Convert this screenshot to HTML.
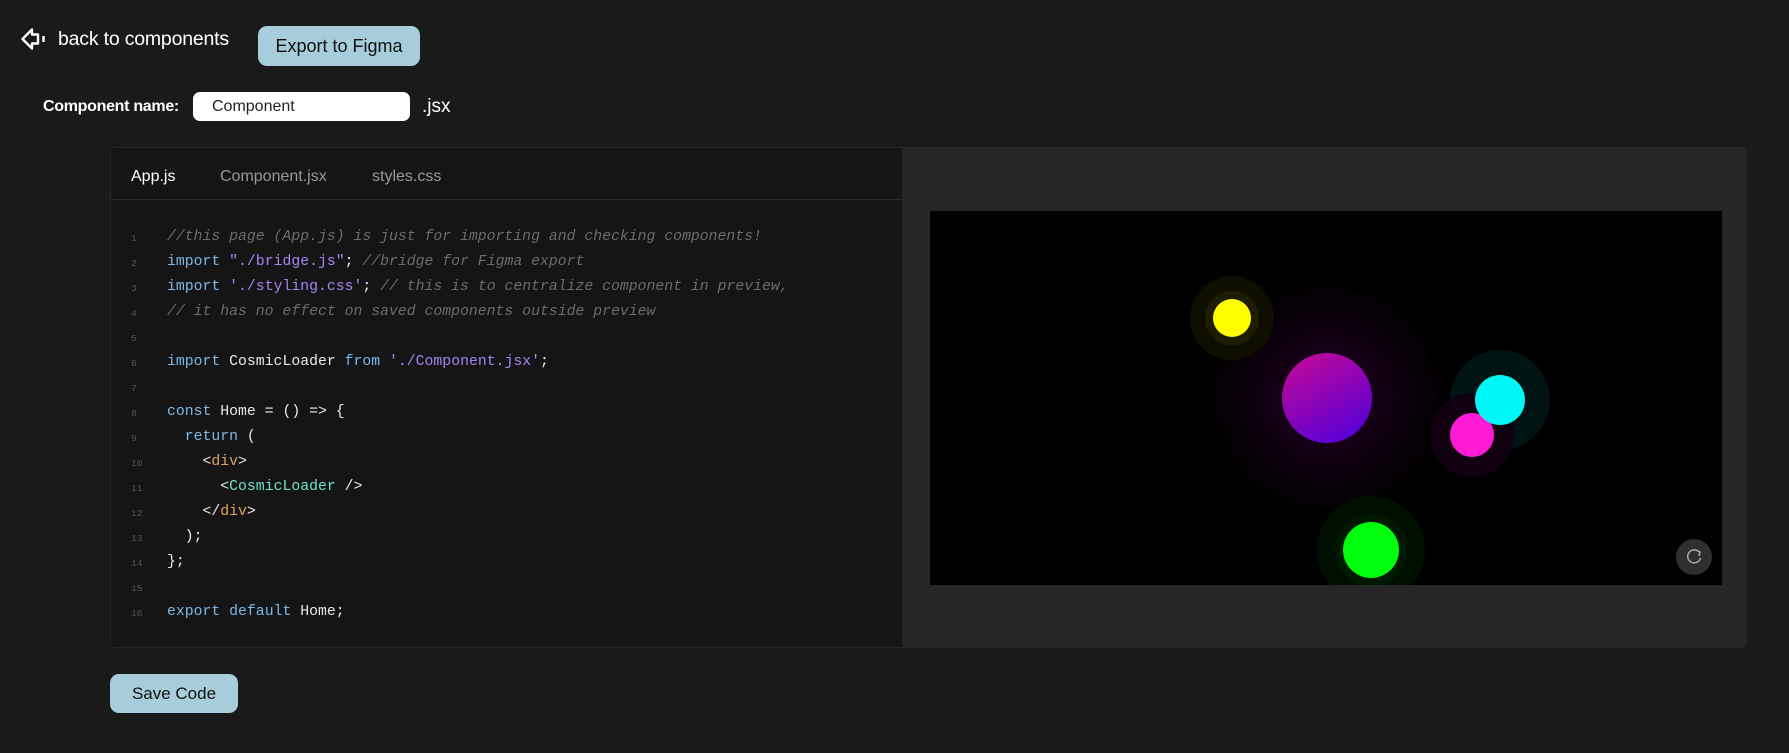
<!DOCTYPE html>
<html><head><meta charset="utf-8"><style>
*{margin:0;padding:0;box-sizing:border-box}
body{width:1789px;height:753px;background:#1a1a1a;font-family:"Liberation Sans",sans-serif;color:#fff;position:relative;overflow:hidden}
.a{position:absolute}
.btn{background:#a6cdd9;color:#111;border-radius:9px;font-size:18px;display:flex;align-items:center;justify-content:center}
.code{font-family:"Liberation Mono",monospace;font-size:14.8px;white-space:pre;color:#eaeaea}
.ln{position:absolute;left:131px;font-size:9.5px;color:#555;font-family:"Liberation Mono",monospace}
.cl{position:absolute;left:167px}
.c{color:#6c6c6c;font-style:italic}.k{color:#7cb9e8}.s{color:#a585f5}.t{color:#e0a458}.g{color:#6fe3c8}
</style></head><body>
<svg class="a" style="left:20px;top:26px" width="28" height="26" viewBox="0 0 28 26"><path d="M2.5 13 L12 3.5 L12 8.5 L18 8.5 L18 17.5 L12 17.5 L12 22.5 Z" fill="none" stroke="#fff" stroke-width="2.4" stroke-linejoin="round"/><line x1="23.5" y1="10" x2="23.5" y2="16" stroke="#fff" stroke-width="2.4"/></svg>
<div class="a" style="left:58px;top:28px;font-size:19.5px;letter-spacing:-0.2px">back to components</div>
<div class="a btn" style="left:258px;top:26px;width:162px;height:40px">Export to Figma</div>
<div class="a" style="left:43px;top:98px;font-size:16px;font-weight:bold;letter-spacing:-0.3px">Component name:</div>
<div class="a" style="left:193px;top:92px;width:217px;height:29px;background:#fff;border-radius:7px;color:#222;font-size:16px;padding:6px 0 0 19px">Component</div>
<div class="a" style="left:422px;top:96px;font-size:19px">.jsx</div>
<div class="a" style="left:110px;top:147px;width:1637px;height:501px;background:#262626;border-radius:5px;overflow:hidden">
 <div class="a" style="left:0;top:0;width:793px;height:501px;background:#151515;border:1px solid #262626"></div>
 <div class="a" style="left:0;top:52px;width:793px;height:1px;background:#2c2c2c"></div>
 <div class="a" style="left:21px;top:21px;font-size:16px;color:#fff">App.js</div>
 <div class="a" style="left:110px;top:21px;font-size:16px;color:#999">Component.jsx</div>
 <div class="a" style="left:262px;top:21px;font-size:16px;color:#999">styles.css</div>
</div>
<div class="code">
<span class="ln" style="top:233px">1</span><span class="cl c" style="top:229px">//this page (App.js) is just for importing and checking components!</span>
<span class="ln" style="top:258px">2</span><span class="cl" style="top:254px"><span class="k">import</span> <span class="s">"./bridge.js"</span>; <span class="c">//bridge for Figma export</span></span>
<span class="ln" style="top:283px">3</span><span class="cl" style="top:279px"><span class="k">import</span> <span class="s">'./styling.css'</span>; <span class="c">// this is to centralize component in preview,</span></span>
<span class="ln" style="top:308px">4</span><span class="cl c" style="top:304px">// it has no effect on saved components outside preview</span>
<span class="ln" style="top:333px">5</span>
<span class="ln" style="top:358px">6</span><span class="cl" style="top:354px"><span class="k">import</span> CosmicLoader <span class="k">from</span> <span class="s">'./Component.jsx'</span>;</span>
<span class="ln" style="top:383px">7</span>
<span class="ln" style="top:408px">8</span><span class="cl" style="top:404px"><span class="k">const</span> Home = () =&gt; {</span>
<span class="ln" style="top:433px">9</span><span class="cl" style="top:429px">  <span class="k">return</span> (</span>
<span class="ln" style="top:458px">10</span><span class="cl" style="top:454px">    &lt;<span class="t">div</span>&gt;</span>
<span class="ln" style="top:483px">11</span><span class="cl" style="top:479px">      &lt;<span class="g">CosmicLoader</span> /&gt;</span>
<span class="ln" style="top:508px">12</span><span class="cl" style="top:504px">    &lt;/<span class="t">div</span>&gt;</span>
<span class="ln" style="top:533px">13</span><span class="cl" style="top:529px">  );</span>
<span class="ln" style="top:558px">14</span><span class="cl" style="top:554px">};</span>
<span class="ln" style="top:583px">15</span>
<span class="ln" style="top:608px">16</span><span class="cl" style="top:604px"><span class="k">export</span> <span class="k">default</span> Home;</span>
</div>
<div class="a" style="left:930px;top:211px;width:792px;height:374px;background:#000;overflow:hidden">
 <svg width="792" height="374" style="position:absolute;left:0;top:0">
  <defs>
   <radialGradient id="pg" cx="0.5" cy="0.5" r="0.5"><stop offset="0" stop-color="#3a0038" stop-opacity="0.8"/><stop offset="0.5" stop-color="#200022" stop-opacity="0.6"/><stop offset="1" stop-color="#0d000d" stop-opacity="0.3"/></radialGradient>
   <linearGradient id="pu" x1="0.2" y1="0.1" x2="0.7" y2="1"><stop offset="0" stop-color="#b8089c"/><stop offset="1" stop-color="#5600d6"/></linearGradient>
  </defs>
  <circle cx="397" cy="187" r="110" fill="url(#pg)"/>
  <circle cx="302" cy="107" r="42" fill="#0f0f00"/>
  <circle cx="302" cy="107" r="27" fill="#262600" opacity="0.6"/>
  <circle cx="397" cy="187" r="45" fill="url(#pu)"/>
  <circle cx="302" cy="107" r="19" fill="#ffff00"/>
  <circle cx="570" cy="189" r="50" fill="#001414"/>
  <circle cx="542" cy="224" r="42" fill="#100010"/>
  <circle cx="542" cy="224" r="22" fill="#ff1ad6"/>
  <circle cx="570" cy="189" r="25" fill="#00ffff" opacity="0.97"/>
  <circle cx="441" cy="339" r="54" fill="#001000"/>
  <circle cx="441" cy="339" r="36" fill="#002000" opacity="0.7"/>
  <circle cx="441" cy="339" r="28" fill="#00ff0c"/>
  <circle cx="764" cy="346" r="18" fill="#2f2f2f"/>
  <path d="M769 341 A6.5 6.5 0 1 0 770.5 347" fill="none" stroke="#aaa" stroke-width="1.5"/>
  <path d="M766 339 L770 341 L769 345" fill="none" stroke="#aaa" stroke-width="1.5"/>
 </svg>
</div>
<div class="a btn" style="left:110px;top:674px;width:128px;height:39px;font-size:17px">Save Code</div>
</body></html>
